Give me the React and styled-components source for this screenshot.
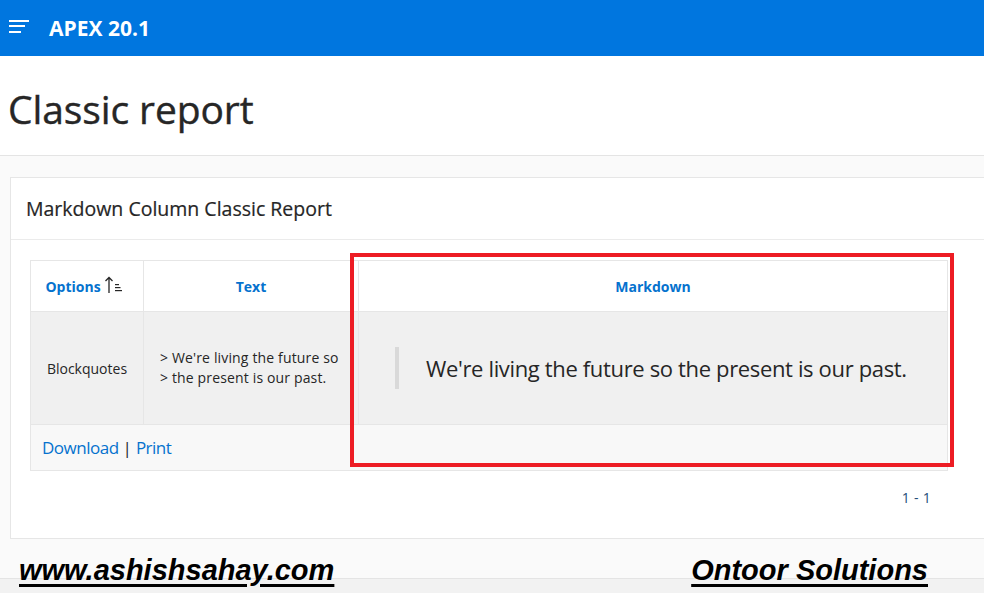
import React from "react";
import styled, { createGlobalStyle } from "styled-components";

const GlobalStyle = createGlobalStyle`
	html, body {
		margin: 0;
		padding: 0;
		background: #fafafa;
		overflow: hidden;
	}
	body {
		font-family: "Open Sans", "Noto Sans", sans-serif;
		color: #262626;
	}
`;

const HamburgerIcon = () => (
	<svg width="22" height="16" viewBox="0 0 22 16">
		<rect x="0" y="1" width="20" height="2" fill="#fff" />
		<rect x="0" y="6" width="16" height="2" fill="#fff" />
		<rect x="0" y="12" width="12" height="2" fill="#fff" />
	</svg>
);

const SortIcon = () => (
	<svg width="22" height="18" viewBox="0 0 22 18">
		<path d="M5 17V1.5M1.5 5L5 1.5L8.5 5" stroke="#262626" strokeWidth="1.3" fill="none" />
		<rect x="11" y="8" width="4" height="1.2" fill="#262626" />
		<rect x="11" y="11" width="5.5" height="1.2" fill="#262626" />
		<rect x="11" y="14" width="7" height="1.2" fill="#262626" />
	</svg>
);

export default function App() {
	return (
		<Page>
			<GlobalStyle />
			<TopBar>
				<HamburgerIcon />
				<AppName>APEX 20.1</AppName>
			</TopBar>
			<TitleBar>
				<PageTitle>Classic report</PageTitle>
			</TitleBar>
			<Body>
				<Card>
					<CardHeader>Markdown Column Classic Report</CardHeader>
					<CardBody>
						<TableWrap>
							<Report>
								<thead>
									<tr>
										<HeadCell width={112}>
											<HeadLabel>
												Options
												<SortIcon />
											</HeadLabel>
										</HeadCell>
										<HeadCell width={214}>Text</HeadCell>
										<HeadCell>Markdown</HeadCell>
									</tr>
								</thead>
								<tbody>
									<tr>
										<DataCell>Blockquotes</DataCell>
										<DataCell align="left">
											<RawText>
												&gt; We're living the future so
												<br />
												&gt; the present is our past.
											</RawText>
										</DataCell>
										<DataCell align="left">
											<Quote>We're living the future so the present is our past.</Quote>
										</DataCell>
									</tr>
								</tbody>
								<tfoot>
									<tr>
										<FootCell colSpan={3}>
											<FootLink>Download</FootLink>
											<Pipe>|</Pipe>
											<FootLink>Print</FootLink>
										</FootCell>
									</tr>
								</tfoot>
							</Report>
							<Highlight />
						</TableWrap>
						<Pagination>1 - 1</Pagination>
					</CardBody>
				</Card>
			</Body>
			<PageFooter />
			<Watermarks>
				<Mark>www.ashishsahay.com</Mark>
				<Mark>Ontoor Solutions</Mark>
			</Watermarks>
		</Page>
	);
}

const Page = styled.div`
	position: relative;
	width: 984px;
	height: 593px;
	overflow: hidden;
	background: #fafafa;
`;

const TopBar = styled.header`
	height: 56px;
	background: #0076df;
	display: flex;
	align-items: center;
	padding-left: 9px;
	gap: 18px;
	box-sizing: border-box;
	svg {
		margin-top: -2px;
	}
`;

const AppName = styled.div`
	color: #fff;
	font-family: "Open Sans", sans-serif;
	font-weight: 700;
	font-size: 21px;
	margin-top: -1px;
`;

const TitleBar = styled.div`
	background: #fff;
	height: 100px;
	border-bottom: 1px solid #e4e4e4;
	display: flex;
	align-items: center;
	padding-left: 8px;
	box-sizing: border-box;
`;

const PageTitle = styled.h1`
	margin: 6px 0 0;
	font-size: 39px;
	font-weight: 400;
	color: #262626;
	letter-spacing: -0.1px;
	-webkit-text-stroke: 0.4px #262626;
`;

const Body = styled.div`
	padding: 21px 0 0 10px;
`;

const Card = styled.section`
	width: 1000px;
	height: 362px;
	background: #fff;
	border: 1px solid #e6e6e6;
	box-sizing: border-box;
`;

const CardHeader = styled.div`
	height: 62px;
	border-bottom: 1px solid #ebebeb;
	display: flex;
	align-items: center;
	padding-left: 15px;
	font-size: 19.5px;
	font-weight: 500;
	color: #262626;
	box-sizing: border-box;
	-webkit-text-stroke: 0.2px #262626;
`;

const CardBody = styled.div`
	padding: 20px 0 0 19px;
`;

const TableWrap = styled.div`
	position: relative;
	width: 918px;
`;

const Report = styled.table`
	width: 918px;
	border-collapse: collapse;
	border: 1px solid #e6e6e6;
	table-layout: fixed;
`;

const HeadCell = styled.th`
	width: ${(p) => (p.width ? `${p.width}px` : "auto")};
	height: 50px;
	border: 1px solid #e6e6e6;
	background: #fff;
	color: #0572ce;
	font-size: 14px;
	font-weight: 700;
	text-align: center;
	padding: 0;
`;

const HeadLabel = styled.span`
	display: inline-flex;
	align-items: center;
	gap: 3px;
	margin-left: -3px;
	svg {
		margin-top: -2px;
	}
`;

const DataCell = styled.td`
	height: 112px;
	background: #f0f0f0;
	border: 1px solid #e6e6e6;
	border-top: none;
	font-size: 14px;
	color: #262626;
	text-align: ${(p) => p.align || "center"};
	padding: 0;
`;

const RawText = styled.div`
	padding-left: 16px;
	line-height: 20px;
	font-size: 14px;
	letter-spacing: 0.15px;
`;

const Quote = styled.blockquote`
	margin: 0 0 0 36px;
	padding: 0 0 0 27px;
	border-left: 4px solid #d9d9d9;
	height: 42px;
	display: flex;
	align-items: center;
	font-size: 22px;
	color: #262626;
	letter-spacing: -0.35px;
`;

const FootCell = styled.td`
	height: 45px;
	background: #f8f8f8;
	border: 1px solid #e6e6e6;
	padding: 0 0 0 11px;
	font-size: 17px;
	text-align: left;
`;

const FootLink = styled.a`
	color: #0572ce;
	text-decoration: none;
	letter-spacing: -0.5px;
`;

const Pipe = styled.span`
	color: #262626;
	margin: 0 4px;
`;

const Highlight = styled.div`
	position: absolute;
	left: 320px;
	top: -7px;
	width: 604px;
	height: 214px;
	border: 4px solid #ed1c24;
	box-sizing: border-box;
	pointer-events: none;
`;

const Pagination = styled.div`
	width: 918px;
	text-align: right;
	padding: 17px 17px 0 0;
	box-sizing: border-box;
	font-size: 14px;
	letter-spacing: 0.3px;
	color: #1f4e79;
`;

const PageFooter = styled.footer`
	position: absolute;
	left: 0;
	right: 0;
	bottom: 0;
	height: 14px;
	background: #f2f2f2;
	border-top: 1px solid #e4e4e4;
`;

const Watermarks = styled.div`
	position: absolute;
	left: 19px;
	right: 56px;
	top: 556px;
	display: flex;
	justify-content: space-between;
	line-height: 1;
`;

const Mark = styled.span`
	font-family: "Liberation Sans", Arial, sans-serif;
	font-weight: 700;
	font-style: italic;
	font-size: 29px;
	color: #000;
	text-decoration: underline;
	text-decoration-thickness: 3px;
	text-underline-offset: 4px;
`;
